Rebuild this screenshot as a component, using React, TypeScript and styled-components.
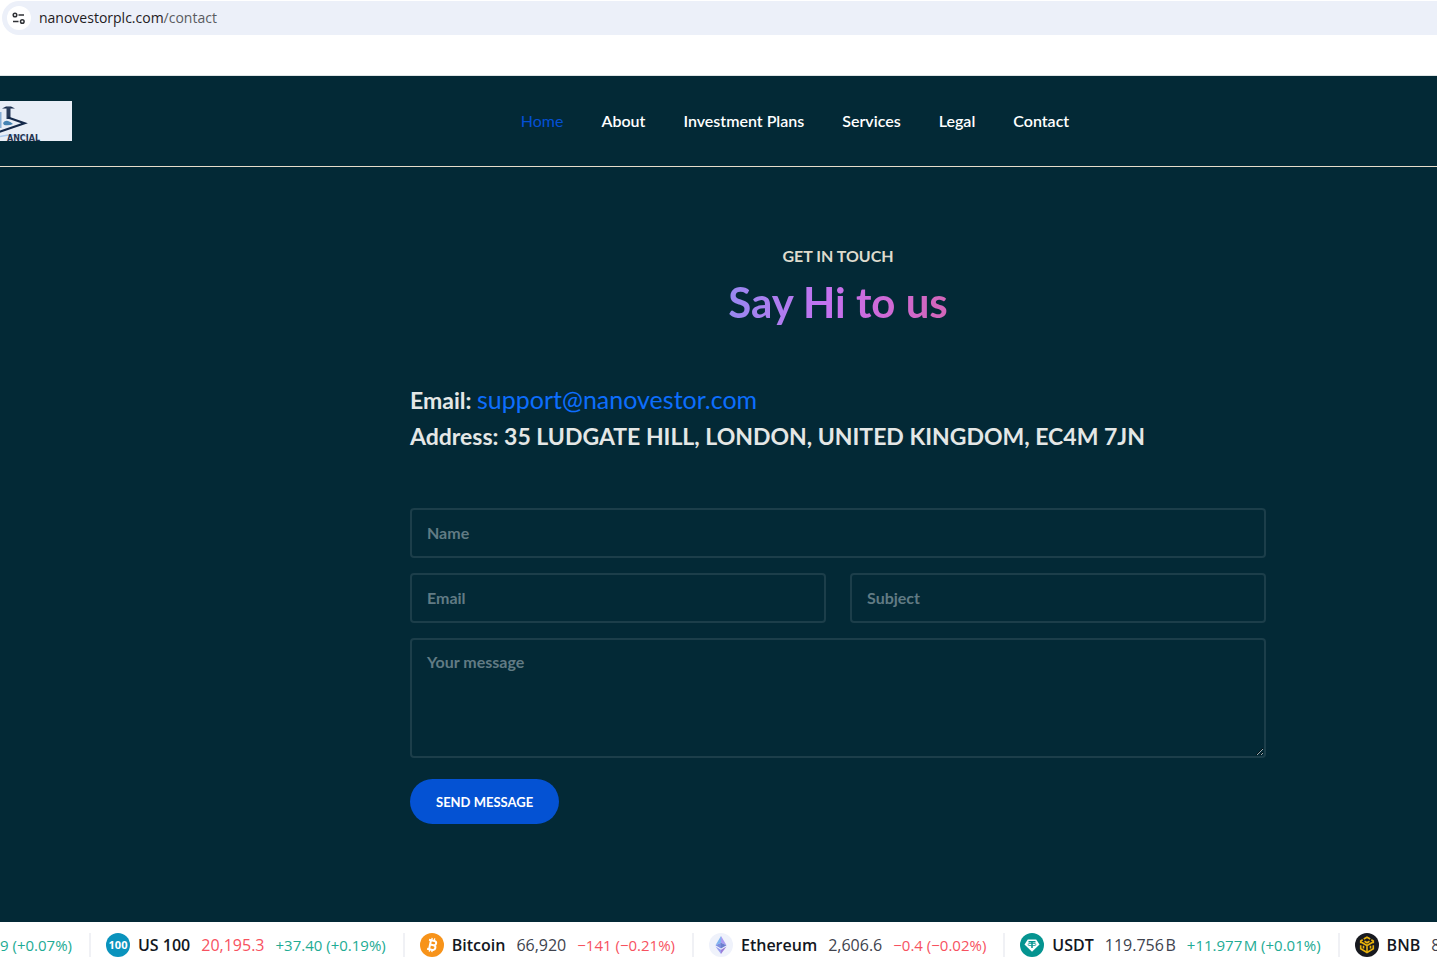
import React from "react";
import styled, { createGlobalStyle } from "styled-components";

const GlobalStyle = createGlobalStyle`
  *, *::before, *::after { box-sizing: border-box; }
  body {
    margin: 0;
    background: #fff;
    font-family: Lato, "Liberation Sans", sans-serif;
  }
`;

const Page = styled.div`
  display: flex;
  flex-direction: column;
  height: 100vh;
  overflow: hidden;
`;

const BrowserBar = styled.div`
  flex: none;
  padding: 1px 0 40px 2px;
  border-bottom: 1px solid #dfe6e6;
  background: #fff;
`;

const AddressField = styled.div`
  display: flex;
  align-items: center;
  gap: 8px;
  height: 34px;
  padding-left: 5px;
  border-radius: 17px 0 0 17px;
  background: #ecf0f9;
  color: #1f2023;
  font-family: "Open Sans", sans-serif;
  font-size: 14px;
  line-height: 20px;
`;

const SiteInfo = styled.button`
  display: grid;
  place-items: center;
  width: 24px;
  height: 24px;
  padding: 0;
  border: 0;
  border-radius: 50%;
  background: #fff;
`;

const UrlPath = styled.span`
  color: #5a5c61;
`;

const Site = styled.div`
  display: flex;
  flex: 1;
  flex-direction: column;
  min-height: 0;
  background: #032936;
`;

const Header = styled.header`
  display: flex;
  flex: none;
  align-items: center;
  height: 91px;
  border-bottom: 1px solid #e6dccb;
`;

const LogoLink = styled.a`
  display: block;
  width: 72px;
  height: 40px;
`;

const Nav = styled.nav`
  display: flex;
  flex: 1;
  justify-content: center;
  gap: 38px;
  padding-left: 81px;
`;

const NavLink = styled.a<{ $active?: boolean }>`
  color: ${({ $active }) => ($active ? "#0450d4" : "#fff")};
  font-size: 16px;
  font-weight: ${({ $active }) => ($active ? 400 : 600)};
  line-height: 24px;
  text-decoration: none;
`;

const Main = styled.main`
  flex: 1;
  padding: 77px 0 0 239px;
`;

const Content = styled.div`
  max-width: 856px;
  margin: 0 auto;
`;

const Eyebrow = styled.p`
  margin: 0;
  color: #dedbcd;
  font-size: 16px;
  font-weight: 700;
  line-height: 24px;
  text-align: center;
`;

const Title = styled.h1`
  width: fit-content;
  margin: 9px auto 53px;
  background: linear-gradient(90deg, #9888f0, #c472f0 45%, #ce6ad8 70%, #d266b8);
  background-clip: text;
  color: transparent;
  font-size: 42px;
  font-weight: 700;
  line-height: 51px;
`;

const Details = styled.address`
  margin-bottom: 53px;
  color: #e4e7e6;
  font-size: 23px;
  font-style: normal;
  font-weight: 700;
  line-height: 37px;
`;

const DetailLine = styled.div`
  height: 37px;
`;

const MailLink = styled.a`
  color: #0d6efd;
  font-size: 25px;
  font-weight: 400;
  text-decoration: none;
`;

const Form = styled.form`
  display: grid;
  grid-template-columns: 1fr 1fr;
  gap: 15px 24px;
`;

const Field = styled.input<{ $wide?: boolean }>`
  grid-column: ${({ $wide }) => ($wide ? "1 / -1" : "auto")};
  width: 100%;
  height: 50px;
  padding: 9px 15px 11px;
  border: 2px solid #1c3e4a;
  border-radius: 4px;
  outline: 0;
  background: transparent;
  color: #fff;
  font-family: inherit;
  font-size: 16px;
  font-weight: 700;
  line-height: 24px;

  &::placeholder {
    color: #617b84;
    opacity: 1;
  }
`;

const MessageField = styled(Field)`
  display: block;
  height: 120px;
  padding: 10px 15px;
  resize: vertical;
`;

const SubmitButton = styled.button`
  justify-self: start;
  height: 45px;
  margin-top: 6px;
  padding: 0 26px;
  border: 0;
  border-radius: 23px;
  background: #0452d3;
  color: #fff;
  font-family: inherit;
  font-size: 13px;
  font-weight: 700;
`;

const Ticker = styled.footer`
  display: flex;
  flex: none;
  height: 35px;
  padding-top: 11px;
  overflow: hidden;
  background: #fff;
  font-family: "Open Sans", sans-serif;
  font-size: 16px;
  line-height: 24px;
  white-space: nowrap;
`;

const Quote = styled.div`
  display: flex;
  flex: none;
  gap: 11px;
  height: 24px;
  margin-right: 15px;
  padding-right: 17px;
  border-right: 2px solid #f0f1f5;
`;

const Coin = styled.span`
  display: flex;
  gap: 8px;
  color: #131722;
  font-weight: 600;
`;

const Price = styled.span<{ $tone?: "up" | "down" }>`
  color: ${({ $tone }) => ($tone === "up" ? "#22ab94" : $tone === "down" ? "#f7525f" : "#40434e")};
`;

const Change = styled(Price)`
  font-size: 15px;
`;

const SiteInfoIcon = () => (
  <svg width="14" height="14" viewBox="0 0 14 14" fill="none" stroke="#303236" strokeWidth="1.5">
    <circle cx="3" cy="4" r="1.8" />
    <path d="M6.5 4H12M1 10.5h5.5" />
    <circle cx="10.3" cy="10.5" r="1.8" />
  </svg>
);

const Logo = () => (
  <svg width="72" height="40" viewBox="0 0 72 40">
    <rect width="72" height="40" fill="#e8eef7" />
    <path d="M0 11h1.5v16H0z" fill="#86aed6" />
    <path d="M3 22q2-3 5-2 3 1 5 3-4 2-9 1z" fill="#4584b4" />
    <path d="M2 7.500 6 5.500h5l4 2z" fill="#14294a" />
    <path d="M8.500 6v12" stroke="#2a3d5c" strokeWidth="4" />
    <path d="M8 16.500 24.500 22.300-1 31" fill="none" stroke="#14294a" strokeWidth="2.200" />
    <path d="M0 35.500q14-3 28 0" fill="none" stroke="#a9c9ee" strokeWidth="1.500" />
    <text x="40" y="40" textAnchor="end" fill="#25334f" fontFamily="DejaVu Sans, sans-serif" fontSize="8" fontWeight="700">ANCIAL</text>
  </svg>
);

const NasdaqIcon = () => (
  <svg width="24" height="24" viewBox="0 0 24 24">
    <circle cx="12" cy="12" r="12" fill="#0a93bd" />
    <text x="12" y="16" textAnchor="middle" fill="#fff" fontFamily="Open Sans, sans-serif" fontSize="11" fontWeight="700">100</text>
  </svg>
);

const BitcoinIcon = () => (
  <svg width="24" height="24" viewBox="0 0 24 24">
    <circle cx="12" cy="12" r="12" fill="#f7931a" />
    <g transform="rotate(12 12 12)" fill="none" stroke="#fff">
      <path d="M8 7.500h5.500a2.200 2.200 0 0 1 0 4.400H10m3.500 0a2.400 2.400 0 0 1 0 4.800H8M10 7.500v9" strokeWidth="2" />
      <path d="M10.700 5v2.500m2.600-2.500v2.500m-2.600 9V19m2.600-2.500V19" strokeWidth="1.300" />
    </g>
  </svg>
);

const EthereumIcon = () => (
  <svg width="24" height="24" viewBox="0 0 24 24">
    <circle cx="12" cy="12" r="12" fill="#eff2fb" />
    <path d="M12 3 6.500 12.300 12 9.800z" fill="#7fb4f0" />
    <path d="m12 3 5.500 9.300L12 9.800z" fill="#a99bf0" />
    <path d="M6.500 12.300 12 9.800v5.700z" fill="#7d8fe0" />
    <path d="M17.500 12.300 12 9.800v5.700z" fill="#6b7fce" />
    <path d="m6.500 13.500 5.500 3.200V21z" fill="#9a9ff0" />
    <path d="m17.500 13.500-5.500 3.200V21z" fill="#9a7ed8" />
  </svg>
);

const TetherIcon = () => (
  <svg width="24" height="24" viewBox="0 0 24 24">
    <circle cx="12" cy="12" r="12" fill="#059490" />
    <path d="M7.800 6.500h8.400l3.300 5L12 18.800 4.500 11.500z" fill="#fff" />
    <path d="M8.500 8.800h7M12 8.800v6.200" stroke="#059490" strokeWidth="1.500" />
    <ellipse cx="12" cy="11.500" rx="4.200" ry="1.200" fill="none" stroke="#059490" strokeWidth=".8" />
  </svg>
);

const BnbIcon = () => (
  <svg width="24" height="24" viewBox="0 0 24 24">
    <circle cx="12" cy="12" r="12" fill="#181a20" />
    <g fill="none" stroke="#e9b30c" strokeWidth="1.600">
      <path d="M8.800 6 12 4.200 15.200 6M5.700 10.300V8l2-1.200M18.300 10.300V8l-2-1.200" />
      <path d="m5.900 9 6.100 3.500L18.100 9M12 12.500v6.300M9.500 8.300l2.500 1.500 2.500-1.500" />
      <path d="M5.700 12.300v3.500L12 19.500l6.300-3.700v-3.500M8.500 12.700v2.800M15.500 12.700v2.800" />
    </g>
  </svg>
);

type QuoteData = {
  name: string;
  icon: React.ReactNode;
  price: string;
  priceTone?: "up" | "down";
  change: string;
  tone: "up" | "down";
};

const quotes: QuoteData[] = [
  { name: "US 100", icon: <NasdaqIcon />, price: "20,195.3", priceTone: "down", change: "+37.40 (+0.19%)", tone: "up" },
  { name: "Bitcoin", icon: <BitcoinIcon />, price: "66,920", change: "−141 (−0.21%)", tone: "down" },
  { name: "Ethereum", icon: <EthereumIcon />, price: "2,606.6", change: "−0.4 (−0.02%)", tone: "down" },
  { name: "USDT", icon: <TetherIcon />, price: "119.756\u200aB", change: "+11.977\u200aM (+0.01%)", tone: "up" },
];

const links = ["Home", "About", "Investment Plans", "Services", "Legal", "Contact"];

export default function App() {
  return (
    <Page>
      <GlobalStyle />
      <BrowserBar>
        <AddressField>
          <SiteInfo type="button" aria-label="Site information">
            <SiteInfoIcon />
          </SiteInfo>
          <span>
            nanovestorplc.com<UrlPath>/contact</UrlPath>
          </span>
        </AddressField>
      </BrowserBar>
      <Site>
        <Header>
          <LogoLink href="#" aria-label="Nanovestor">
            <Logo />
          </LogoLink>
          <Nav>
            {links.map((label, index) => (
              <NavLink key={label} href="#" $active={index === 0}>
                {label}
              </NavLink>
            ))}
          </Nav>
        </Header>
        <Main>
          <Content>
            <Eyebrow>GET IN TOUCH</Eyebrow>
            <Title>Say Hi to us</Title>
            <Details>
              <DetailLine>
                Email: <MailLink href="mailto:support@nanovestor.com">support@nanovestor.com</MailLink>
              </DetailLine>
              <DetailLine>Address: 35 LUDGATE HILL, LONDON, UNITED KINGDOM, EC4M 7JN</DetailLine>
            </Details>
            <Form onSubmit={(event) => event.preventDefault()}>
              <Field $wide type="text" placeholder="Name" aria-label="Name" />
              <Field type="email" placeholder="Email" aria-label="Email" />
              <Field type="text" placeholder="Subject" aria-label="Subject" />
              <MessageField as="textarea" $wide placeholder="Your message" aria-label="Your message" />
              <SubmitButton type="submit">SEND MESSAGE</SubmitButton>
            </Form>
          </Content>
        </Main>
      </Site>
      <Ticker>
        <Quote>
          <Change $tone="up">9 (+0.07%)</Change>
        </Quote>
        {quotes.map((quote) => (
          <Quote key={quote.name}>
            <Coin>
              {quote.icon}
              {quote.name}
            </Coin>
            <Price $tone={quote.priceTone}>{quote.price}</Price>
            <Change $tone={quote.tone}>{quote.change}</Change>
          </Quote>
        ))}
        <Quote>
          <Coin>
            <BnbIcon />
            BNB
          </Coin>
          <Price>8</Price>
        </Quote>
      </Ticker>
    </Page>
  );
}
